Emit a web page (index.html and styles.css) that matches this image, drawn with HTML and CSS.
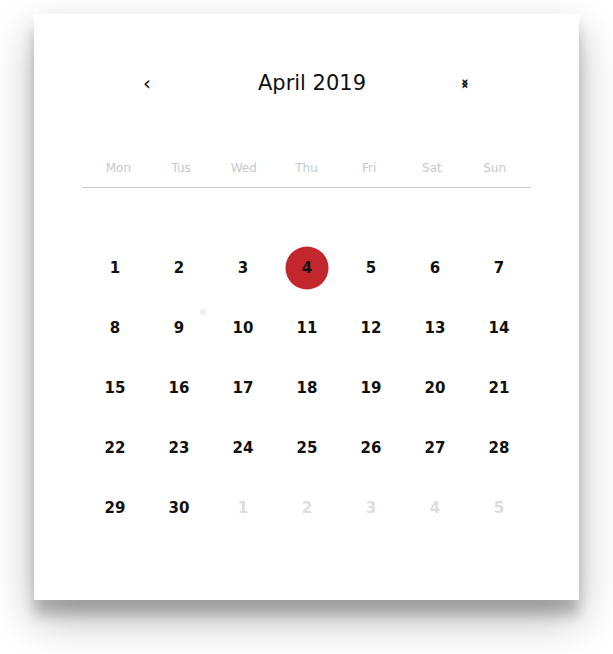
FILE: index.html
```html
<!DOCTYPE html>
<html>
<head>
<meta charset="utf-8">
<link rel="stylesheet" href="styles.css">
</head>
<body>
<div class="card">
  <div class="header">
    <span class="nav prev">‹</span>
    <span class="title">April 2019</span>
    <span class="nav next"><span class="g">‹</span><span class="g">›</span></span>
  </div>
  <div class="weekdays">
    <span>Mon</span><span>Tus</span><span>Wed</span><span>Thu</span><span>Fri</span><span>Sat</span><span>Sun</span>
  </div>
  <div class="days">
    <span>1</span><span>2</span><span>3</span><span class="sel"><i class="circle"></i><b>4</b></span><span>5</span><span>6</span><span>7</span>
    <span>8</span><span class="ripple-cell">9<i class="ripple"></i></span><span>10</span><span>11</span><span>12</span><span>13</span><span>14</span>
    <span>15</span><span>16</span><span>17</span><span>18</span><span>19</span><span>20</span><span>21</span>
    <span>22</span><span>23</span><span>24</span><span>25</span><span>26</span><span>27</span><span>28</span>
    <span>29</span><span>30</span><span class="muted">1</span><span class="muted">2</span><span class="muted">3</span><span class="muted">4</span><span class="muted">5</span>
  </div>
</div>
</body>
</html>
```
FILE: styles.css
```css
html, body {
  margin: 0;
  background: #fff;
}
body {
  padding: 14px 34px;
  min-height: 654px;
  box-sizing: border-box;
  font-family: "DejaVu Sans", sans-serif;
}
.card {
  width: 545px;
  height: 586px;
  box-sizing: border-box;
  background: #fff;
  padding-top: 49px;
  box-shadow: 0 19px 40px rgba(0,0,0,0.28), 0 15px 12px rgba(0,0,0,0.20);
}
.header {
  display: flex;
  align-items: center;
  height: 40px;
}
.nav {
  width: 40px;
  text-align: center;
  font-size: 20px;
  color: #111;
  position: relative;
}
.prev { margin-left: 93px; }
.next { margin-right: 94px; height: 24px; font-size: 22px; }
.next .g {
  position: absolute;
  left: 0;
  right: 0;
  top: 0;
  line-height: 24px;
}
.title {
  flex: 1;
  text-align: center;
  font-size: 21px;
  color: #111;
  padding-left: 12px;
}
.weekdays {
  margin: 54px 48px 0;
  padding: 0 5px 10px;
  border-bottom: 1px solid #cccccc;
  display: grid;
  grid-template-columns: repeat(7, 1fr);
  height: 20px;
  line-height: 22px;
  font-size: 12px;
  color: #c8c8c8;
  text-align: center;
}
.days {
  margin: 50px 48px 0 49px;
  display: grid;
  grid-template-columns: repeat(7, 64px);
  grid-auto-rows: 60px;
}
.days span {
  display: flex;
  align-items: center;
  justify-content: center;
  font-size: 15px;
  font-weight: bold;
  color: #111;
  position: relative;
}
.days span.muted { color: #dddddd; }
.circle {
  position: absolute;
  width: 43px;
  height: 43px;
  border-radius: 50%;
  background: #c1272d;
  left: 50%;
  top: 50%;
  transform: translate(-50%, -50%);
}
.sel b { position: relative; }
.ripple {
  position: absolute;
  width: 6px;
  height: 6px;
  border-radius: 50%;
  background: #fbeaeb;
  left: 53px;
  top: 11px;
}
```
